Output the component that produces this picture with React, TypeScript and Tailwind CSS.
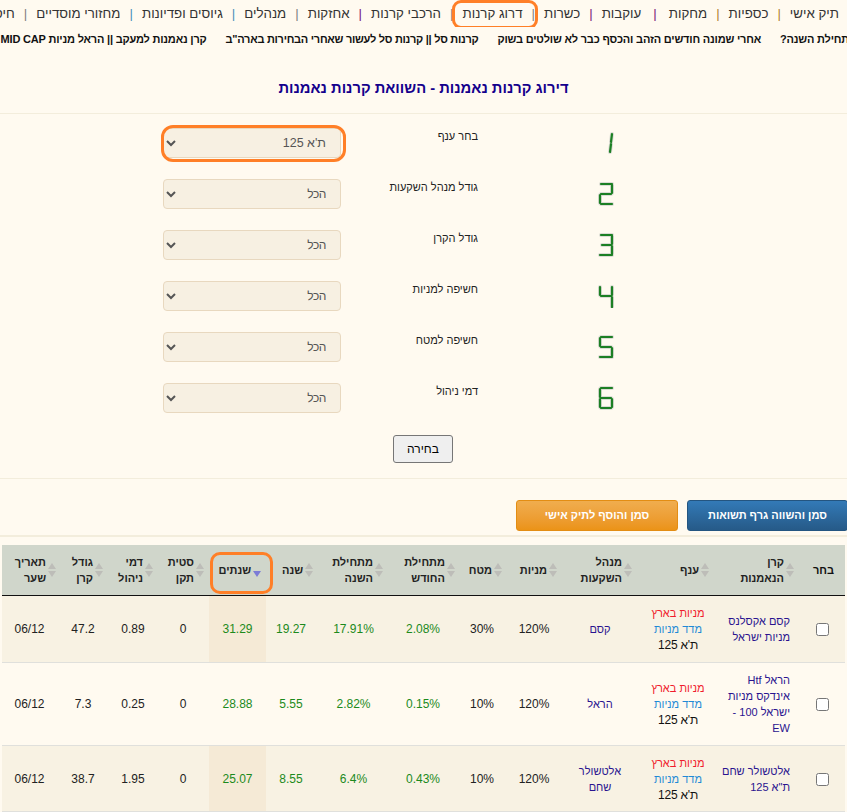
import React from "react";

const navItems = [
  ["תיק אישי", "px-[9px] text-[#b08030]"],
  ["כספיות", "px-[9px] text-[#b08030]"],
  ["מחקות", "px-[12px] text-[#7a1a7a]"],
  ["עוקבות", "px-[9px] text-[#7a1a7a]"],
  ["כשרות", "px-[9px] text-[#808080]"],
  ["דרוג קרנות", "px-[9px] text-[#808080]"],
  ["הרכבי קרנות", "px-[9px] text-[#7a1a7a]"],
  ["אחזקות", "px-[9px] text-[#808080]"],
  ["מנהלים", "px-[9px] text-[#4a90b8]"],
  ["גיוסים ופדיונות", "px-[9px] text-[#4a90b8]"],
  ["מחזורי מוסדיים", "px-[9px] text-[#808080]"],
  ["חיסכון", "px-[9px] text-[#808080]"],
];

const digits: Record<number, string> = {
  1: "M14 3 L13 11 M13 13 L12 21",
  2: "M3 2H14 M14 3V11 M3 12H13 M2 13V21 M3 22H14",
  3: "M3 2H14 M14 3V11 M4 12H13 M14 13V21 M2 22H14",
  4: "M2 3V11 M3 12H13 M14 3V11 M14 13V23",
  5: "M3 2H14 M2 3V11 M3 12H13 M14 13V21 M2 22H14",
  6: "M3 2H14 M2 3V11 M3 12H13 M14 13V21 M2 13V21 M3 22H13",
};

function Digit({ n }: { n: number }) {
  return (
    <svg width="16" height="24" viewBox="0 0 16 24" fill="none" strokeLinecap="round">
      <path d={digits[n]} stroke="#dcdcd4" strokeWidth="4" />
      <path d={digits[n]} stroke="#1c7f24" strokeWidth="2.2" />
    </svg>
  );
}

const filters = [
  ["בחר ענף", "ת'א 125"],
  ["גודל מנהל השקעות", "הכל"],
  ["גודל הקרן", "הכל"],
  ["חשיפה למניות", "הכל"],
  ["חשיפה למטח", "הכל"],
  ["דמי ניהול", "הכל"],
];

function SortArrows({ active }: { active?: boolean }) {
  if (active)
    return (
      <svg width="8" height="14" viewBox="0 0 8 14" className="shrink-0 mt-[8px]">
        <path d="M0 4H8L4 10Z" fill="#7c7cd6" />
      </svg>
    );
  return (
    <svg width="8" height="14" viewBox="0 0 8 14" className="shrink-0">
      <path d="M4 0L8 6H0Z M0 8H8L4 14Z" fill="#bdbdb8" />
    </svg>
  );
}

const headers: [string[], string][] = [
  [["קרן", "הנאמנות"], "pr-[6px]"],
  [["ענף"], "pr-[6px]"],
  [["מנהל", "השקעות"], "pr-[9px]"],
  [["מניות"], "pr-[2px]"],
  [["מטח"], "pr-[7px]"],
  [["מתחילת", "החודש"], "pr-[0px]"],
  [["מתחילת", "השנה"], "pr-[8px]"],
  [["שנה"], "pr-[3px]"],
  [["שנתים"], "pr-[5px]"],
  [["סטית", "תקן"], "pr-[5px]"],
  [["דמי", "ניהול"], "pr-[4px]"],
  [["גודל", "קרן"], "pr-[6px]"],
  [["תאריך", "שער"], "pr-[1px]"],
];

const rows = [
  {
    name: ["קסם אקסלנס", "מניות ישראל"],
    mgr: "קסם",
    vals: ["120%", "30%", "2.08%", "17.91%", "19.27", "31.29", "0", "0.89", "47.2", "06/12"],
    bg: "bg-[#f8f2e3]",
    sort: "bg-[#f5ead6]",
    h: "h-[67px]",
  },
  {
    name: ["הראל Htf", "אינדקס מניות", "ישראל 100 -", "EW"],
    mgr: "הראל",
    vals: ["120%", "10%", "0.15%", "2.82%", "5.55", "28.88", "0", "0.25", "7.3", "06/12"],
    bg: "bg-[#fffaf0]",
    sort: "bg-[#fffaf0]",
    h: "h-[83px]",
  },
  {
    name: ["אלטשולר שחם", "ת\"א 125"],
    mgr: "אלטשולר שחם",
    vals: ["120%", "10%", "0.43%", "6.4%", "8.55", "25.07", "0", "1.95", "38.7", "06/12"],
    bg: "bg-[#f8f2e3]",
    sort: "bg-[#f5ead6]",
    h: "h-[66px]",
  },
];

const greenIdx = [2, 3, 4, 5];

export default function App() {
  return (
    <div
      dir="rtl"
      className="w-full h-[812px] overflow-hidden bg-[#fffaf0] text-black text-[12px] font-['Liberation_Sans',Arial,sans-serif]"
    >
      {/* top nav */}
      <nav className="flex items-center h-[27px] pr-[8px] overflow-hidden whitespace-nowrap text-[13.3px] text-[#333]">
        {navItems.map(([label, sep], i) => (
          <React.Fragment key={label}>
            <span className="relative shrink-0">
              {label}
              {label === "דרוג קרנות" && (
                <span className="absolute -top-[4px] -bottom-[6px] -right-[15px] -left-[11px] rounded-[9px] border-[3px] border-[#ff7f27]" />
              )}
            </span>
            {i < navItems.length - 1 && <span className={`shrink-0 ${sep}`}>|</span>}
          </React.Fragment>
        ))}
      </nav>

      {/* ticker */}
      <div className="flex items-center h-[24px] overflow-hidden whitespace-nowrap font-bold text-[11px] tracking-[-0.2px] text-[#111] gap-[19px] -mr-[2px]">
        <span className="shrink-0">תחילת השנה?</span>
        <span className="shrink-0">אחרי שמונה חודשים הזהב והכסף כבר לא שולטים בשוק</span>
        <span className="shrink-0 tracking-[-0.28px]">קרנות סל || קרנות סל לעשור שאחרי הבחירות בארה"ב</span>
        <span className="shrink-0">קרן נאמנות למעקב || הראל מניות MID CAP</span>
      </div>

      <h1 className="mt-[25px] h-[24px] leading-[24px] text-center font-bold text-[14.75px] text-[#14008c]">
        דירוג קרנות נאמנות - השוואת קרנות נאמנות
      </h1>

      <div className="mt-[13px] border-t border-[#f3eddc]" />

      {/* filters */}
      <div className="mt-[14px]">
        {filters.map(([label, value], i) => (
          <div key={label} className="flex items-start h-[51.1px] pr-[233px]">
            <div className="w-[30px] h-[30px] flex items-center">
              <Digit n={i + 1} />
            </div>
            <div className="w-[243px] pr-[106px] pt-[1px] leading-[14px] text-[11px] text-[#222]">{label}</div>
            <div className="relative w-[178px]">
              <select
                defaultValue={value}
                className={
                  i === 0
                    ? "w-full h-[30px] pr-[10px] pl-[4px] bg-[#f7f0e2] border border-[#e8d8bf] rounded-[4px] text-[12.5px] text-[#555]"
                    : "w-full h-[30px] pr-[10px] pl-[4px] bg-[#f7f0e2] border border-[#e8d8bf] rounded-[4px] text-[12px] tracking-[-0.4px] text-[#555]"
                }
              >
                <option>{value}</option>
              </select>
              {i === 0 && (
                <span className="absolute -top-[3px] -bottom-[4px] -left-[2px] -right-[5px] rounded-[12px] border-[3px] border-[#ff7f27] pointer-events-none" />
              )}
            </div>
          </div>
        ))}
      </div>

      <div className="flex justify-center mt-[0px] pr-[1px]">
        <button className="w-[60px] h-[28px] bg-[#efefef] border border-[#767676] rounded-[3px] text-[12px] text-black">
          בחירה
        </button>
      </div>

      <div className="mt-[15px] border-t border-[#f3eddc]" />

      {/* actions */}
      <div className="flex gap-[9px] mt-[21px] -mr-px">
        <button className="w-[161px] h-[31px] rounded-[3px] border border-[#245580] bg-linear-to-b from-[#337ab7] to-[#265a88] text-white font-bold text-[11px]">
          סמן והשווה גרף תשואות
        </button>
        <button className="w-[162px] h-[31px] rounded-[3px] border border-[#e38d13] bg-linear-to-b from-[#f0ad4e] to-[#eb9316] text-white font-bold text-[11px]">
          סמן והוסף לתיק אישי
        </button>
      </div>

      <div className="mt-[4px] border-t-2 border-[#f3eddc]" />

      {/* table */}
      <div className="mt-[8px] mx-[2px]">
        <table className="w-[843px] table-fixed border-collapse text-[12px]">
          <colgroup>
            <col className="w-[45px]" />
            <col className="w-[85px]" />
            <col className="w-[74px]" />
            <col className="w-[82px]" />
            <col className="w-[50px]" />
            <col className="w-[54px]" />
            <col className="w-[64px]" />
            <col className="w-[75px]" />
            <col className="w-[50px]" />
            <col className="w-[57px]" />
            <col className="w-[52px]" />
            <col className="w-[48px]" />
            <col className="w-[52px]" />
            <col className="w-[55px]" />
          </colgroup>
          <thead>
            <tr className="h-[51px] bg-[#d0d6cb] border-b border-[#111]">
              <th className="font-bold text-[11px] text-center text-[#111] pl-[2px]">בחר</th>
              {headers.map(([lines, pad]) => {
                const active = lines[0] === "שנתים";
                return (
                  <th key={lines.join()} className="relative font-bold text-[11px] text-[#222] p-0">
                    <div className={`flex items-center gap-[2px] leading-[16px] ${pad}`}>
                      <SortArrows active={active} />
                      <div className="text-right whitespace-nowrap">
                        {lines.map((l) => (
                          <div key={l}>{l}</div>
                        ))}
                      </div>
                    </div>
                    {active && (
                      <span className="absolute top-[7px] bottom-[1px] right-[-7px] left-[1px] rounded-[10px] border-[3px] border-[#ff7f27]" />
                    )}
                  </th>
                );
              })}
            </tr>
          </thead>
          <tbody>
            {rows.map((r) => (
              <tr key={r.mgr} className={`${r.h} ${r.bg} border-b border-[#e0e0dc]`}>
                <td className="text-center">
                  <input type="checkbox" className="align-middle" />
                </td>
                <td className="pr-[10px] text-right text-[11px] leading-[16px] text-[#2a148f] whitespace-nowrap">
                  {r.name.map((l) => (
                    <div key={l}>{l}</div>
                  ))}
                </td>
                <td className="text-center text-[11px] leading-[16px]">
                  <div className="text-[#f01c2c]">מניות בארץ</div>
                  <div className="text-[#1f8ad6]">מדד מניות</div>
                  <div className="text-[#111] text-[12px] tracking-[-0.2px]">ת'א 125</div>
                </td>
                <td className="px-[8px] text-center text-[11px] leading-[16px] text-[#2a148f]">{r.mgr}</td>
                {r.vals.map((v, i) => (
                  <td
                    key={i}
                    className={`text-center ${i === 5 ? r.sort : ""} ${greenIdx.includes(i) ? "text-[#1c8a1c]" : "text-[#222]"}`}
                  >
                    {v}
                  </td>
                ))}
              </tr>
            ))}
          </tbody>
        </table>
      </div>
    </div>
  );
}
